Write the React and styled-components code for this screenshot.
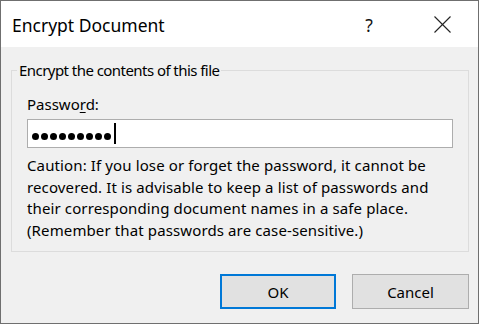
import React from "react";
import styled, { createGlobalStyle } from "styled-components";

const Global = createGlobalStyle`
  html, body { margin: 0; padding: 0; background: #ffffff; }
  * { box-sizing: border-box; }
`;

const Window = styled.div`
  width: 479px;
  height: 324px;
  border: 1px solid #6f6f6f;
  display: flex;
  flex-direction: column;
  background: #f0f0f0;
  font-family: "Noto Sans", "Open Sans", sans-serif;
  color: #000;
`;

const TitleBar = styled.div`
  height: 46px;
  background: #ffffff;
  display: flex;
  align-items: center;
  padding: 0 13px 0 11px;
`;

const Title = styled.div`
  flex: 1;
  font-size: 17.5px;
  line-height: 22px;
  padding-top: 2px;
`;

const TitleButtons = styled.div`
  display: flex;
  gap: 27px;
  align-items: center;
`;

const TitleButton = styled.div`
  width: 46px;
  height: 46px;
  display: flex;
  align-items: center;
  justify-content: center;
  font-size: 17.5px;
  color: #111;
  padding-top: ${(p) => (p.$glyph ? "2px" : "0")};
`;

const Body = styled.div`
  flex: 1;
  display: flex;
  flex-direction: column;
  padding: 13px 9px 0 10px;
`;

const Group = styled.fieldset`
  margin: 0;
  border: 1px solid #dcdcdc;
  padding: 0 15px 10px 15px;
  display: flex;
  flex-direction: column;
  font-size: 15px;
`;

const Legend = styled.legend`
  padding: 0 2px;
  margin-left: -10px;
  line-height: 20px;
  font-size: 15px;
  letter-spacing: -0.55px;
`;

const Label = styled.div`
  margin-top: 14px;
  line-height: 20px;
`;

const AccessKey = styled.span`
  text-decoration: underline;
  text-underline-offset: 2px;
`;

const Field = styled.div`
  margin-top: 5px;
  width: 426px;
  height: 29px;
  border: 1px solid #adadad;
  background: #ffffff;
  display: flex;
  align-items: center;
  gap: 2px;
  padding-left: 4px;
`;

const Dot = styled.span`
  width: 7px;
  height: 7px;
  border-radius: 50%;
  background: #000;
  margin-top: 5px;
`;

const Caret = styled.span`
  width: 2px;
  height: 21px;
  background: #000;
  margin-left: 1px;
`;

const Caution = styled.p`
  margin: 7px 0 0;
  line-height: 21.5px;
  font-size: 15px;
  letter-spacing: 0.12px;
`;

const ButtonRow = styled.div`
  margin-top: 22px;
  display: flex;
  justify-content: flex-end;
  gap: 16px;
`;

const Button = styled.button`
  width: ${(p) => (p.$default ? "116px" : "117px")};
  height: 35px;
  background: #e1e1e1;
  border: ${(p) => (p.$default ? "2px solid #0078d7" : "1px solid #adadad")};
  font-family: "Noto Sans", "Open Sans", sans-serif;
  font-size: 15px;
  color: #000;
  padding: 0;
  border-radius: 0;
`;

const CloseIcon = () => (
  <svg width="17" height="17" viewBox="0 0 17 17" fill="none" stroke="#222" strokeWidth="1.1">
    <line x1="0.5" y1="0.5" x2="16.5" y2="16.5" />
    <line x1="16.5" y1="0.5" x2="0.5" y2="16.5" />
  </svg>
);

export default function App() {
  return (
    <>
      <Global />
      <Window>
        <TitleBar>
          <Title>Encrypt Document</Title>
          <TitleButtons>
            <TitleButton $glyph>?</TitleButton>
            <TitleButton>
              <CloseIcon />
            </TitleButton>
          </TitleButtons>
        </TitleBar>
        <Body>
          <Group>
            <Legend>Encrypt the contents of this file</Legend>
            <Label>
              Passwo<AccessKey>r</AccessKey>d:
            </Label>
            <Field>
              {Array.from({ length: 9 }).map((_, i) => (
                <Dot key={i} />
              ))}
              <Caret />
            </Field>
            <Caution>
              Caution: If you lose or forget the password, it cannot be
              <br />
              recovered. It is advisable to keep a list of passwords and
              <br />
              their corresponding document names in a safe place.
              <br />
              (Remember that passwords are case-sensitive.)
            </Caution>
          </Group>
          <ButtonRow>
            <Button $default>OK</Button>
            <Button>Cancel</Button>
          </ButtonRow>
        </Body>
      </Window>
    </>
  );
}
